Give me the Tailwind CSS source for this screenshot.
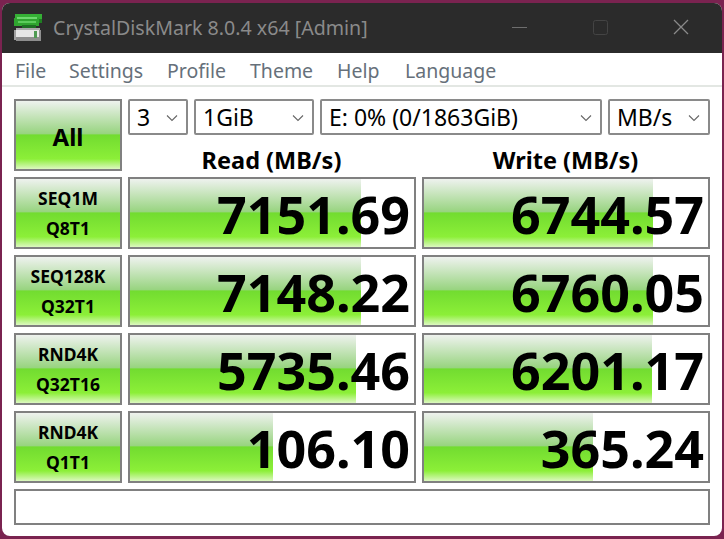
<!doctype html>
<html>
<head>
  <meta charset="UTF-8">
  <script src="https://cdn.jsdelivr.net/npm/@tailwindcss/browser@4"></script>
</head>
<body class="w-[724px] h-[539px] overflow-hidden bg-[#7a2350] pt-[3px] px-[2px] font-['Noto_Sans','Open_Sans',sans-serif] text-black">
  <div class="w-[720px] h-[533px] bg-white rounded-[8px] overflow-hidden">
    <!-- title bar -->
    <div class="h-[50px] bg-[#2b2b2b] flex items-center relative">
      <svg class="ml-[12px] w-[28px] h-[28px] -mt-[1px]" viewBox="0 0 28 28" shape-rendering="crispEdges">
        <rect x="1" y="0" width="27" height="5" fill="#35b035"/>
        <rect x="0" y="4" width="25" height="8" fill="#2fa52f"/>
        <rect x="3" y="3" width="20" height="2" fill="#6fd86f"/>
        <rect x="4" y="7" width="18" height="2" fill="#5ccc5c"/>
        <rect x="25" y="5" width="3" height="4" fill="#1f7f22"/>
        <rect x="8" y="11" width="14" height="3" fill="#1e6f24"/>
        <rect x="2" y="14" width="24" height="2" fill="#a8a8a8"/>
        <rect x="0" y="16" width="27" height="8" fill="#e6e6e6"/>
        <rect x="0" y="16" width="2" height="10" fill="#a0a0a0"/>
        <rect x="2" y="23" width="25" height="4" fill="#8e8e8e"/>
        <rect x="25" y="16" width="2" height="8" fill="#909090"/>
        <rect x="20" y="17" width="3" height="7" fill="#4e9a52"/>
      </svg>
      <span class="ml-[11px] text-[19.6px] text-[#8a8a8a] leading-none -mt-[1px]">CrystalDiskMark 8.0.4 x64 [Admin]</span>
      <svg class="absolute right-0 top-0 w-[222px] h-[50px]" viewBox="0 0 222 50" fill="none">
        <path d="M12 24.5H27" stroke="#6e6e6e" stroke-width="1"/>
        <rect x="93.5" y="17.5" width="14" height="14" rx="2" stroke="#444" stroke-width="1"/>
        <path d="M174 17L188 31M188 17L174 31" stroke="#8a8a8a" stroke-width="1.3"/>
      </svg>
    </div>
    <!-- menu -->
    <div class="h-[34px] border-b-2 border-[#e3e7e3] flex items-center pl-[13px] text-[19.5px] leading-none text-[#66707a] pt-[3px]">
      <span class="w-[54px]">File</span><span class="w-[98px]">Settings</span><span class="w-[83px]">Profile</span><span class="w-[87px]">Theme</span><span class="w-[68px]">Help</span><span>Language</span>
    </div>
    <!-- main grid -->
    <div class="px-[12px] pt-[12px] grid grid-cols-[108px_288px_288px] gap-x-[6px]">
      <div class="row-span-2 h-[72px] pt-[3px] border-2 border-[#808080] bg-[linear-gradient(#eef2ee_0%,#98d480_48%,#72dc30_50%,#8cef38_85%,#dcf8c0_100%)] flex items-center justify-center text-[24px] font-bold">All</div>
      <div class="col-span-2 flex gap-[6px] h-[36px] text-[23px]">
        <div class="w-[60px] border-2 border-[#8a8a8a] rounded-[2px] flex items-center pl-[7px] relative">3<svg class="absolute right-[8px] top-[13px] w-[12px] h-[8px]" viewBox="0 0 12 8" fill="none"><path d="M1 1.5L6 6.5L11 1.5" stroke="#666" stroke-width="1.1"/></svg></div>
        <div class="w-[120px] border-2 border-[#8a8a8a] rounded-[2px] flex items-center pl-[7px] relative">1GiB<svg class="absolute right-[8px] top-[13px] w-[12px] h-[8px]" viewBox="0 0 12 8" fill="none"><path d="M1 1.5L6 6.5L11 1.5" stroke="#666" stroke-width="1.1"/></svg></div>
        <div class="w-[282px] border-2 border-[#8a8a8a] rounded-[2px] flex items-center pl-[7px] relative">E: 0% (0/1863GiB)<svg class="absolute right-[8px] top-[13px] w-[12px] h-[8px]" viewBox="0 0 12 8" fill="none"><path d="M1 1.5L6 6.5L11 1.5" stroke="#666" stroke-width="1.1"/></svg></div>
        <div class="w-[102px] border-2 border-[#8a8a8a] rounded-[2px] flex items-center pl-[7px] relative">MB/s<svg class="absolute right-[8px] top-[13px] w-[12px] h-[8px]" viewBox="0 0 12 8" fill="none"><path d="M1 1.5L6 6.5L11 1.5" stroke="#666" stroke-width="1.1"/></svg></div>
      </div>
      <div class="h-[42px] flex items-center justify-center text-[23.5px] font-bold pt-[10px] pr-[1px]">Read (MB/s)</div>
      <div class="h-[42px] flex items-center justify-center text-[23.5px] font-bold pt-[10px] pr-[1px]">Write (MB/s)</div>
    </div>
    <div id="rows" class="px-[12px] flex flex-col gap-[6px]">
      <div class="grid grid-cols-[108px_288px_288px] gap-x-[6px] h-[72px]">
        <div class="border-2 border-[#808080] bg-[linear-gradient(#eef2ee_0%,#98d480_48%,#72dc30_50%,#8cef38_85%,#dcf8c0_100%)] flex flex-col items-center justify-center text-[17.5px] font-bold leading-[30px]"><span>SEQ1M</span><span>Q8T1</span></div>
        <div class="relative border-2 border-[#808080] bg-white"><div class="h-full w-[231px] bg-[linear-gradient(#eef2ee_0%,#98d480_48%,#72dc30_50%,#8cef38_85%,#dcf8c0_100%)]"></div><span class="absolute right-[4px] inset-y-0 pt-[2px] flex items-center text-[52px] font-bold leading-none">7151.69</span></div>
        <div class="relative border-2 border-[#808080] bg-white"><div class="h-full w-[229px] bg-[linear-gradient(#eef2ee_0%,#98d480_48%,#72dc30_50%,#8cef38_85%,#dcf8c0_100%)]"></div><span class="absolute right-[4px] inset-y-0 pt-[2px] flex items-center text-[52px] font-bold leading-none">6744.57</span></div>
      </div>
      <div class="grid grid-cols-[108px_288px_288px] gap-x-[6px] h-[72px]">
        <div class="border-2 border-[#808080] bg-[linear-gradient(#eef2ee_0%,#98d480_48%,#72dc30_50%,#8cef38_85%,#dcf8c0_100%)] flex flex-col items-center justify-center text-[17.5px] font-bold leading-[30px]"><span>SEQ128K</span><span>Q32T1</span></div>
        <div class="relative border-2 border-[#808080] bg-white"><div class="h-full w-[231px] bg-[linear-gradient(#eef2ee_0%,#98d480_48%,#72dc30_50%,#8cef38_85%,#dcf8c0_100%)]"></div><span class="absolute right-[4px] inset-y-0 pt-[2px] flex items-center text-[52px] font-bold leading-none">7148.22</span></div>
        <div class="relative border-2 border-[#808080] bg-white"><div class="h-full w-[229px] bg-[linear-gradient(#eef2ee_0%,#98d480_48%,#72dc30_50%,#8cef38_85%,#dcf8c0_100%)]"></div><span class="absolute right-[4px] inset-y-0 pt-[2px] flex items-center text-[52px] font-bold leading-none">6760.05</span></div>
      </div>
      <div class="grid grid-cols-[108px_288px_288px] gap-x-[6px] h-[72px]">
        <div class="border-2 border-[#808080] bg-[linear-gradient(#eef2ee_0%,#98d480_48%,#72dc30_50%,#8cef38_85%,#dcf8c0_100%)] flex flex-col items-center justify-center text-[17.5px] font-bold leading-[30px]"><span>RND4K</span><span>Q32T16</span></div>
        <div class="relative border-2 border-[#808080] bg-white"><div class="h-full w-[226px] bg-[linear-gradient(#eef2ee_0%,#98d480_48%,#72dc30_50%,#8cef38_85%,#dcf8c0_100%)]"></div><span class="absolute right-[4px] inset-y-0 pt-[2px] flex items-center text-[52px] font-bold leading-none">5735.46</span></div>
        <div class="relative border-2 border-[#808080] bg-white"><div class="h-full w-[228px] bg-[linear-gradient(#eef2ee_0%,#98d480_48%,#72dc30_50%,#8cef38_85%,#dcf8c0_100%)]"></div><span class="absolute right-[4px] inset-y-0 pt-[2px] flex items-center text-[52px] font-bold leading-none">6201.17</span></div>
      </div>
      <div class="grid grid-cols-[108px_288px_288px] gap-x-[6px] h-[72px]">
        <div class="border-2 border-[#808080] bg-[linear-gradient(#eef2ee_0%,#98d480_48%,#72dc30_50%,#8cef38_85%,#dcf8c0_100%)] flex flex-col items-center justify-center text-[17.5px] font-bold leading-[30px]"><span>RND4K</span><span>Q1T1</span></div>
        <div class="relative border-2 border-[#808080] bg-white"><div class="h-full w-[143px] bg-[linear-gradient(#eef2ee_0%,#98d480_48%,#72dc30_50%,#8cef38_85%,#dcf8c0_100%)]"></div><span class="absolute right-[4px] inset-y-0 pt-[2px] flex items-center text-[52px] font-bold leading-none">106.10</span></div>
        <div class="relative border-2 border-[#808080] bg-white"><div class="h-full w-[169px] bg-[linear-gradient(#eef2ee_0%,#98d480_48%,#72dc30_50%,#8cef38_85%,#dcf8c0_100%)]"></div><span class="absolute right-[4px] inset-y-0 pt-[2px] flex items-center text-[52px] font-bold leading-none">365.24</span></div>
      </div>
      <div class="h-[36px] w-[696px] border-2 border-[#808080]"></div>
    </div>
  </div>
</body>
</html>
